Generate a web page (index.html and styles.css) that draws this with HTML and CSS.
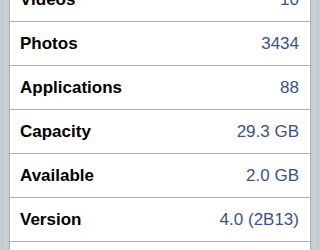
FILE: index.html
```html
<!DOCTYPE html>
<html>
<head>
<meta charset="utf-8">
<link rel="stylesheet" href="styles.css">
</head>
<body>
<div class="page">
  <ul class="group">
    <li class="row"><span class="label">Videos</span><span class="value">10</span></li>
    <li class="row"><span class="label">Photos</span><span class="value">3434</span></li>
    <li class="row"><span class="label">Applications</span><span class="value">88</span></li>
    <li class="row"><span class="label">Capacity</span><span class="value">29.3 GB</span></li>
    <li class="row"><span class="label">Available</span><span class="value">2.0 GB</span></li>
    <li class="row"><span class="label">Version</span><span class="value">4.0 (2B13)</span></li>
    <li class="row"></li>
  </ul>
</div>
</body>
</html>
```
FILE: styles.css
```css
html, body {
  margin: 0;
  padding: 0;
}
body {
  width: 320px;
  height: 250px;
  overflow: hidden;
  background: repeating-linear-gradient(90deg, #c5ccd4 0 5px, #cbd2d9 5px 7px);
  font-family: "Liberation Sans", Arial, sans-serif;
}
.page {
  padding: 0 9px;
  margin-top: -22px;
}
.group {
  list-style: none;
  margin: 0;
  padding: 0;
  background: #fff;
  border-left: 1px solid #a9adb3;
  border-right: 1px solid #a9adb3;
}
.row {
  display: flex;
  justify-content: space-between;
  align-items: center;
  height: 43px;
  padding: 1px 11px 0 10px;
  box-sizing: border-box;
  height: 44px;
  border-bottom: 1px solid #abafb4;
}
.label {
  font-weight: bold;
  font-size: 17px;
  color: #000;
}
.value {
  font-size: 17px;
  color: #3a5383;
}
```
